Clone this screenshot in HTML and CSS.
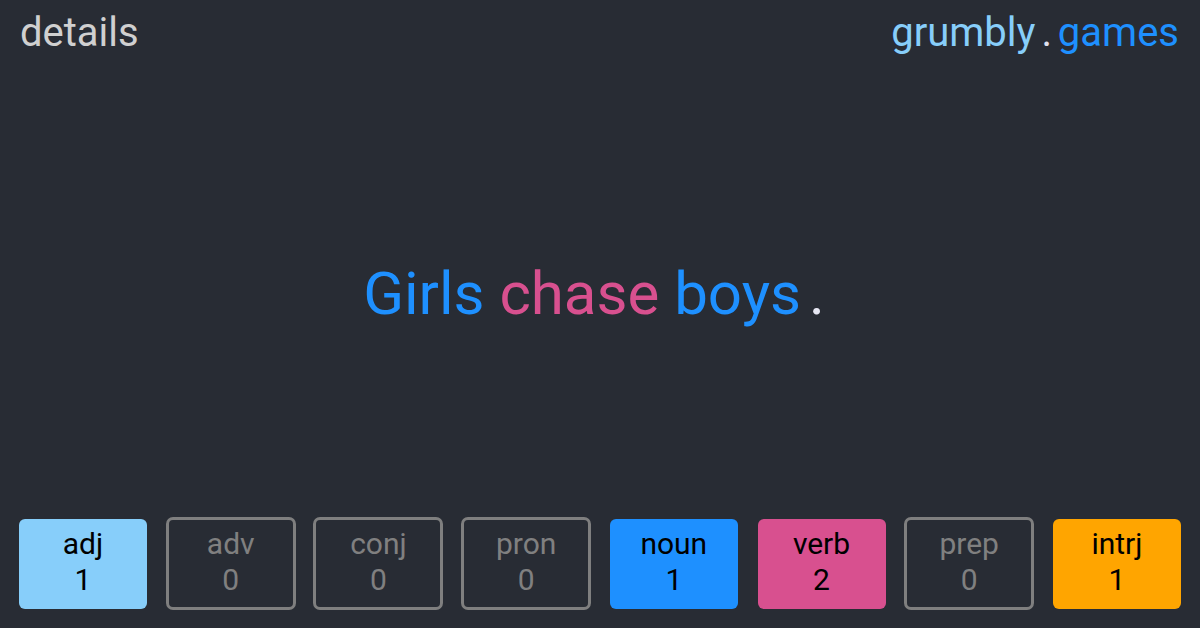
FILE: index.html
```html
<!DOCTYPE html>
<html lang="en">
<head>
<meta charset="utf-8">
<title>details</title>
<link rel="stylesheet" href="styles.css">
</head>
<body>
<div class="page">
  <header class="top">
    <div class="title">details</div>
    <div class="brand"><span class="b1">grumbly</span> <span class="dot">.</span> <span class="b2">games</span></div>
  </header>
  <main class="stage">
    <div class="sentence"><span class="noun">Girls</span> <span class="verb">chase</span> <span class="noun">boys</span><span class="period">.</span></div>
  </main>
  <footer class="counts">
    <div class="box filled adj"><span>adj</span><span>1</span></div>
    <div class="box empty"><span>adv</span><span>0</span></div>
    <div class="box empty"><span>conj</span><span>0</span></div>
    <div class="box empty"><span>pron</span><span>0</span></div>
    <div class="box filled noun-b"><span>noun</span><span>1</span></div>
    <div class="box filled verb-b"><span>verb</span><span>2</span></div>
    <div class="box empty"><span>prep</span><span>0</span></div>
    <div class="box filled intrj"><span>intrj</span><span>1</span></div>
  </footer>
</div>
</body>
</html>
```

FILE: styles.css
```css
html, body {
  margin: 0;
  padding: 0;
}
body {
  background: #282c34;
  font-family: Roboto, "Liberation Sans", sans-serif;
  width: 1200px;
  height: 628px;
  overflow: hidden;
}
.page {
  display: flex;
  flex-direction: column;
  height: 628px;
}
.top {
  display: flex;
  justify-content: space-between;
  align-items: flex-start;
  padding: 9px 21px 0 20px;
  font-size: 40px;
}
.title {
  color: #d0d0d0;
}
.brand {
  word-spacing: -4px;
}
.b1 { color: #87cefa; }
.dot { color: #e0e0ee; }
.b2 { color: #1e90ff; }
.stage {
  flex: 1;
  display: flex;
  align-items: center;
  justify-content: center;
}
.sentence {
  font-size: 60px;
  margin-top: 14px;
  margin-left: -12px;
}
.noun { color: #1e90ff; }
.verb { color: #d8508f; }
.period { color: #e6e6f2; margin-left: 8px; }
.counts {
  display: flex;
  justify-content: space-between;
  align-items: center;
  padding: 0 18px 18px 18px;
}
.box {
  box-sizing: border-box;
  width: 130px;
  height: 93px;
  border-radius: 7px;
  display: flex;
  flex-direction: column;
  align-items: center;
  justify-content: center;
  font-size: 30px;
  line-height: 36px;
  padding-bottom: 4px;
}
.empty {
  border: 3px solid #7f7f7f;
  color: #808080;
}
.filled {
  width: 128px;
  height: 90px;
  margin: 0 1px;
  border-radius: 6px;
  color: #000;
}
.adj { background: #87cefa; }
.noun-b { background: #1e90ff; }
.verb-b { background: #d8508f; }
.intrj { background: #ffa500; }
```
